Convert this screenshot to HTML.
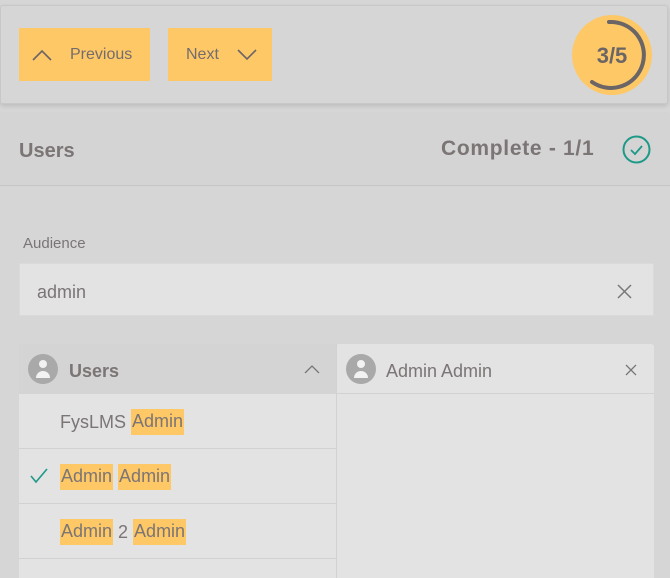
<!DOCTYPE html>
<html><head><meta charset="utf-8"><style>
*{box-sizing:border-box;margin:0;padding:0}
body{width:670px;height:578px;overflow:hidden;background:#d6d6d6;font-family:"Liberation Sans",sans-serif;color:#7b7575;position:relative}
.abs{position:absolute}
.card{left:0;top:5px;width:668px;height:99px;background:#d6d6d6;border:1px solid #c8c8c8;border-radius:3px;box-shadow:0 2px 5px rgba(0,0,0,.12)}
.btn{background:#fec867;height:53px;top:28px;display:flex;align-items:center;font-size:16px;color:#746c6c}
.sec{left:0;top:112px;width:670px;height:74px;background:#d4d4d4;border-bottom:1px solid #c6c6c6;border-radius:3px 3px 0 0}
.input{left:19px;top:263px;width:635px;height:53px;background:#e3e3e3;border:1px solid #dadada}
.row{left:19px;width:317px;height:55px;background:#e3e3e3;border-bottom:1px solid #d2d2d2;font-size:18px;display:flex;align-items:center;padding-left:41px;padding-top:2px}
.hl{background:#fec867;padding:2px 1px 3px}
.av{width:30px;height:30px;border-radius:50%;background:#a9a9a9;overflow:hidden}
</style></head><body>
<div class="abs card"></div>
<div class="abs btn" style="left:19px;width:131px">
 <svg style="margin-left:13px" width="20" height="12" viewBox="0 0 20 12"><path d="M1 11L10 2L19 11" fill="none" stroke="#6b6565" stroke-width="1.6"/></svg>
 <span style="margin-left:18px">Previous</span></div>
<div class="abs btn" style="left:168px;width:104px">
 <span style="margin-left:18px">Next</span>
 <svg style="margin-left:18px" width="20" height="12" viewBox="0 0 20 12"><path d="M1 1L10 10L19 1" fill="none" stroke="#6b6565" stroke-width="1.6"/></svg></div>
<svg class="abs" style="left:570px;top:13px" width="84" height="84" viewBox="0 0 84 84">
 <circle cx="42" cy="42" r="40" fill="#fec867"/>
 <path d="M39 9 A33 33 0 1 1 22 69" fill="none" stroke="#6b6565" stroke-width="4" stroke-linecap="round"/>
 <text x="42" y="50" text-anchor="middle" font-family="Liberation Sans" font-weight="bold" font-size="22" fill="#6b6565">3/5</text>
</svg>
<div class="abs sec"></div>
<div class="abs" style="left:19px;top:140px;font-size:20px;font-weight:bold">Users</div>
<div class="abs" style="left:441px;top:137px;font-size:21px;font-weight:bold;letter-spacing:0.7px">Complete - 1/1</div>
<svg class="abs" style="left:621px;top:134px" width="31" height="31" viewBox="0 0 31 31"><circle cx="15.5" cy="15.5" r="13" fill="none" stroke="#1e9987" stroke-width="2"/><path d="M10 16l4 4 7-8" fill="none" stroke="#1e9987" stroke-width="1.8"/></svg>
<div class="abs" style="left:23px;top:235px;font-size:15px">Audience</div>
<div class="abs input"></div>
<div class="abs" style="left:37px;top:282px;font-size:18px">admin</div>
<svg class="abs" style="left:617px;top:284px" width="15" height="15" viewBox="0 0 15 15"><path d="M1 1L14 14M14 1L1 14" stroke="#777" stroke-width="1.5"/></svg>
<div class="abs" style="left:19px;top:344px;width:317px;height:50px;background:#d4d4d4"></div>
<div class="abs" style="left:336px;top:344px;width:318px;height:234px;background:#e3e3e3;border-radius:3px 3px 0 0"></div>
<div class="abs" style="left:336px;top:393px;width:318px;height:1px;background:#d2d2d2"></div>
<div class="abs" style="left:336px;top:344px;width:1px;height:234px;background:#d2d2d2"></div>
<div class="abs av" style="left:28px;top:354px"><svg width="30" height="30"><circle cx="15" cy="10" r="4" fill="#f2f2f2"/><path d="M8 24a7 7 0 0 1 14 0z" fill="#f2f2f2"/></svg></div>
<div class="abs" style="left:69px;top:361px;font-size:18px;font-weight:bold">Users</div>
<svg class="abs" style="left:304px;top:364px" width="16" height="10"><path d="M1 9L8 2L15 9" fill="none" stroke="#777" stroke-width="1.3"/></svg>
<div class="abs av" style="left:346px;top:354px"><svg width="30" height="30"><circle cx="15" cy="10" r="4" fill="#f2f2f2"/><path d="M8 24a7 7 0 0 1 14 0z" fill="#f2f2f2"/></svg></div>
<div class="abs" style="left:386px;top:361px;font-size:18px">Admin Admin</div>
<svg class="abs" style="left:625px;top:364px" width="12" height="12"><path d="M1 1L11 11M11 1L1 11" stroke="#777" stroke-width="1.3"/></svg>
<div class="abs row" style="top:394px">FysLMS&nbsp;<span class="hl">Admin</span></div>
<div class="abs row" style="top:449px"><span class="hl">Admin</span>&nbsp;<span class="hl">Admin</span></div>
<svg class="abs" style="left:30px;top:468px" width="18" height="16"><path d="M1 8l5 6L17 1" fill="none" stroke="#1e9987" stroke-width="1.6"/></svg>
<div class="abs row" style="top:504px"><span class="hl">Admin</span>&nbsp;2&nbsp;<span class="hl">Admin</span></div>
<div class="abs" style="left:19px;top:559px;width:317px;height:19px;background:#e3e3e3"></div>
</body></html>
